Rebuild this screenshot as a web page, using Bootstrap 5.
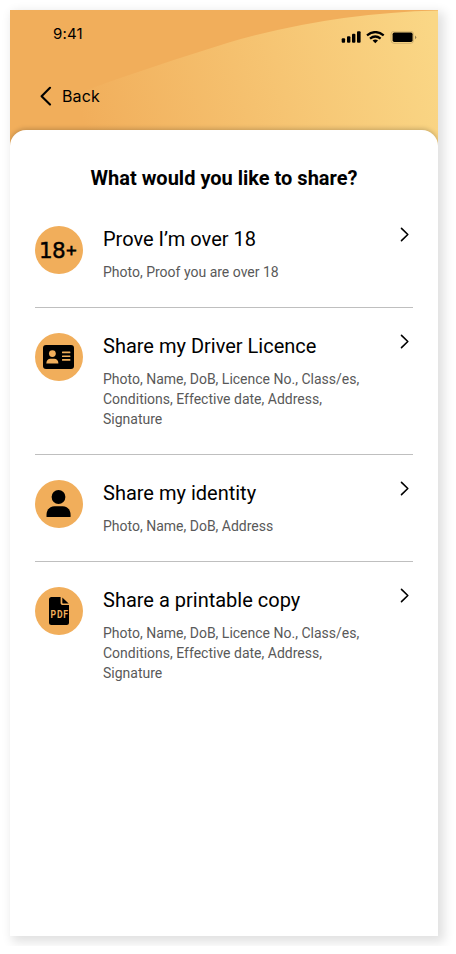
<!DOCTYPE html>
<html lang="en">
<head>
<meta charset="utf-8">
<meta name="viewport" content="width=device-width, initial-scale=1">
<title>Share</title>
<link href="https://cdn.jsdelivr.net/npm/bootstrap@5.3.0/dist/css/bootstrap.min.css" rel="stylesheet">
<style>
  body { font-family: Roboto, sans-serif; color: #000; background: #fff; padding: 10px; }
  .phone { width: 428px; height: 926px; box-shadow: 4px 4px 10px 2px rgba(0,0,0,.12); background: #fff; }
  .hero { height: 136px; background: #f1ae5b; font-family: Inter, sans-serif; }
  .wave { z-index: 0; }
  .status-bar { height: 48px; padding: 0 21px 0 43px; }
  .clock { font-size: 15px; line-height: 18px; letter-spacing: .15px; }
  .back-link { font-size: 16px; line-height: 20px; letter-spacing: .15px; margin: 28px 0 0 30px; gap: 10px; }
  .sheet { margin-top: -16px; border-radius: 16px 16px 0 0; box-shadow: 0 -1px 5px rgba(0,0,0,.22); height: 806px; padding: 36px 25px 0; clip-path: inset(-12px 0 0 0); }
  .sheet-title { font-size: 20px; line-height: 24px; font-weight: 700; margin-bottom: 36px; }
  .share-row { gap: 20px; padding-bottom: 25px; }
  .share-row + .share-row { border-top: 1px solid #bfbfbf; padding-top: 25px; }
  .disc { width: 48px; height: 48px; background: #f1ae5b; }
  .age-text { font-family: "DejaVu Sans", sans-serif; font-size: 21.5px; stroke: #000; stroke-width: .4px; }
  .age-plus { font-size: 14px; stroke-width: .8px; }
  .pdf-text { font-family: Roboto, sans-serif; font-size: 11.5px; font-weight: 700; fill: #f1ae5b; }
  .row-title { font-size: 20px; line-height: 26px; margin-bottom: 10px; }
  .row-text { font-size: 14px; line-height: 20px; color: #595959; max-width: 270px; }
  .chevron { margin: 1px 2px 0 0; }
</style>
</head>
<body>
<main class="phone">
  <header class="hero position-relative">
    <svg class="wave position-absolute top-0 start-0" width="428" height="136" viewBox="0 0 428 136" aria-hidden="true">
      <defs>
        <linearGradient id="sun" gradientUnits="userSpaceOnUse" x1="75" y1="120" x2="425" y2="20">
          <stop offset="0" stop-color="#f1ae5b"/><stop offset="1" stop-color="#fad786"/>
        </linearGradient>
      </defs>
      <path fill="url(#sun)" d="M0 108Q110 66 218 32.7Q320 3 428 .5V136H0Z"/>
    </svg>
    <div class="status-bar position-relative d-flex align-items-center justify-content-between">
      <span class="clock">9:41</span>
      <svg class="mt-2" width="76" height="14" viewBox="0 0 76 14" aria-hidden="true">
        <rect x="0.7" y="7.3" width="3.4" height="4.4" rx="1"/><rect x="6" y="5.2" width="3.4" height="6.5" rx="1"/><rect x="11" y="2.8" width="3.4" height="8.9" rx="1"/><rect x="16" y=".2" width="3.6" height="11.5" rx="1"/>
        <g fill="none" stroke="#000" stroke-width="2.3"><path d="M26 4.4Q34.3-2.2 42.7 4.4"/><path d="M29 7.6Q34.3 3.4 39.6 7.6"/></g>
        <path d="M31.6 9.6Q34.3 7.5 37 9.6L34.3 12.2Z"/>
        <rect x="50" y=".2" width="22.6" height="12.2" rx="3.2" fill="none" stroke="#000" stroke-opacity=".15"/>
        <rect x="51.6" y="1.6" width="20" height="9.3" rx="1.6"/>
        <path d="M74 4.4Q76.5 6.2 74 8.2Z" opacity=".4"/>
      </svg>
    </div>
    <a href="#" class="back-link position-relative d-inline-flex align-items-center text-black text-decoration-none">
      <svg width="12" height="20" viewBox="0 0 12 20" fill="none" stroke="#000" stroke-width="2.1" stroke-linecap="round" stroke-linejoin="round" aria-hidden="true"><path d="M10 1.8L1.6 10.2L10 18.6"/></svg>
      <span>Back</span>
    </a>
  </header>
  <section class="sheet bg-white position-relative">
    <h1 class="sheet-title text-center">What would you like to share?</h1>

    <div class="share-row d-flex align-items-start">
      <svg class="disc rounded-circle flex-shrink-0" viewBox="0 0 48 48">
        <text class="age-text" y="32"><tspan x="3.9">1</tspan><tspan x="17">8</tspan><tspan class="age-plus" x="30.4" y="28.6">+</tspan></text>
      </svg>
      <div class="flex-grow-1"><h2 class="row-title fw-normal">Prove I’m over 18</h2><p class="row-text mb-0">Photo, Proof you are over 18</p></div>
      <svg class="chevron flex-shrink-0" width="12" height="16" viewBox="0 0 12 16" fill="none" stroke="#000" stroke-width="1.6" stroke-linecap="round" stroke-linejoin="round" aria-hidden="true"><path d="M2.5 1.4L8.8 7.5L2.5 13.6"/></svg>
    </div>

    <div class="share-row d-flex align-items-start">
      <svg class="disc rounded-circle flex-shrink-0" viewBox="0 0 48 48" aria-hidden="true">
        <rect x="8" y="12" width="31" height="24" rx="3"/>
        <g fill="#f1ae5b"><circle cx="17.4" cy="20.6" r="3.4"/><path d="M11.3 30.5C11.3 27.5 13.2 25.8 15.4 25.8H19.2C21.6 25.8 23.4 27.6 23.4 30.5Z"/><rect x="27" y="18.6" width="8.4" height="1.7" rx=".5"/><rect x="27" y="22.4" width="8.4" height="1.7" rx=".5"/><rect x="27" y="26.1" width="8.4" height="1.7" rx=".5"/></g>
      </svg>
      <div class="flex-grow-1"><h2 class="row-title fw-normal">Share my Driver Licence</h2><p class="row-text mb-0">Photo, Name, DoB, Licence No., Class/es, Conditions, Effective date, Address, Signature</p></div>
      <svg class="chevron flex-shrink-0" width="12" height="16" viewBox="0 0 12 16" fill="none" stroke="#000" stroke-width="1.6" stroke-linecap="round" stroke-linejoin="round" aria-hidden="true"><path d="M2.5 1.4L8.8 7.5L2.5 13.6"/></svg>
    </div>

    <div class="share-row d-flex align-items-start">
      <svg class="disc rounded-circle flex-shrink-0" viewBox="0 0 48 48" aria-hidden="true">
        <circle cx="23.5" cy="17" r="6.9"/><path d="M11.5 36.5V35C11.5 29.5 15 26.2 19.5 26.2H27.7C32.2 26.2 35.6 29.5 35.6 35V36.5Q35.6 37 35 37H12.1Q11.5 37 11.5 36.5Z"/>
      </svg>
      <div class="flex-grow-1"><h2 class="row-title fw-normal">Share my identity</h2><p class="row-text mb-0">Photo, Name, DoB, Address</p></div>
      <svg class="chevron flex-shrink-0" width="12" height="16" viewBox="0 0 12 16" fill="none" stroke="#000" stroke-width="1.6" stroke-linecap="round" stroke-linejoin="round" aria-hidden="true"><path d="M2.5 1.4L8.8 7.5L2.5 13.6"/></svg>
    </div>

    <div class="share-row d-flex align-items-start">
      <svg class="disc rounded-circle flex-shrink-0" viewBox="0 0 48 48">
        <path d="M16.5 10H25.6V16.2Q25.6 18 27.4 18H34V35.5Q34 38 31.5 38H16.5Q14 38 14 35.5V12.5Q14 10 16.5 10Z"/><path d="M27.3 10.4L33.7 16.4H27.9Q27.3 16.4 27.3 15.8Z"/>
        <text class="pdf-text" transform="translate(15.6 31) scale(.75 1)" letter-spacing="1">PDF</text>
      </svg>
      <div class="flex-grow-1"><h2 class="row-title fw-normal">Share a printable copy</h2><p class="row-text mb-0">Photo, Name, DoB, Licence No., Class/es, Conditions, Effective date, Address, Signature</p></div>
      <svg class="chevron flex-shrink-0" width="12" height="16" viewBox="0 0 12 16" fill="none" stroke="#000" stroke-width="1.6" stroke-linecap="round" stroke-linejoin="round" aria-hidden="true"><path d="M2.5 1.4L8.8 7.5L2.5 13.6"/></svg>
    </div>
  </section>
</main>
<script src="https://cdn.jsdelivr.net/npm/bootstrap@5.3.0/dist/js/bootstrap.bundle.min.js"></script>
</body>
</html>
